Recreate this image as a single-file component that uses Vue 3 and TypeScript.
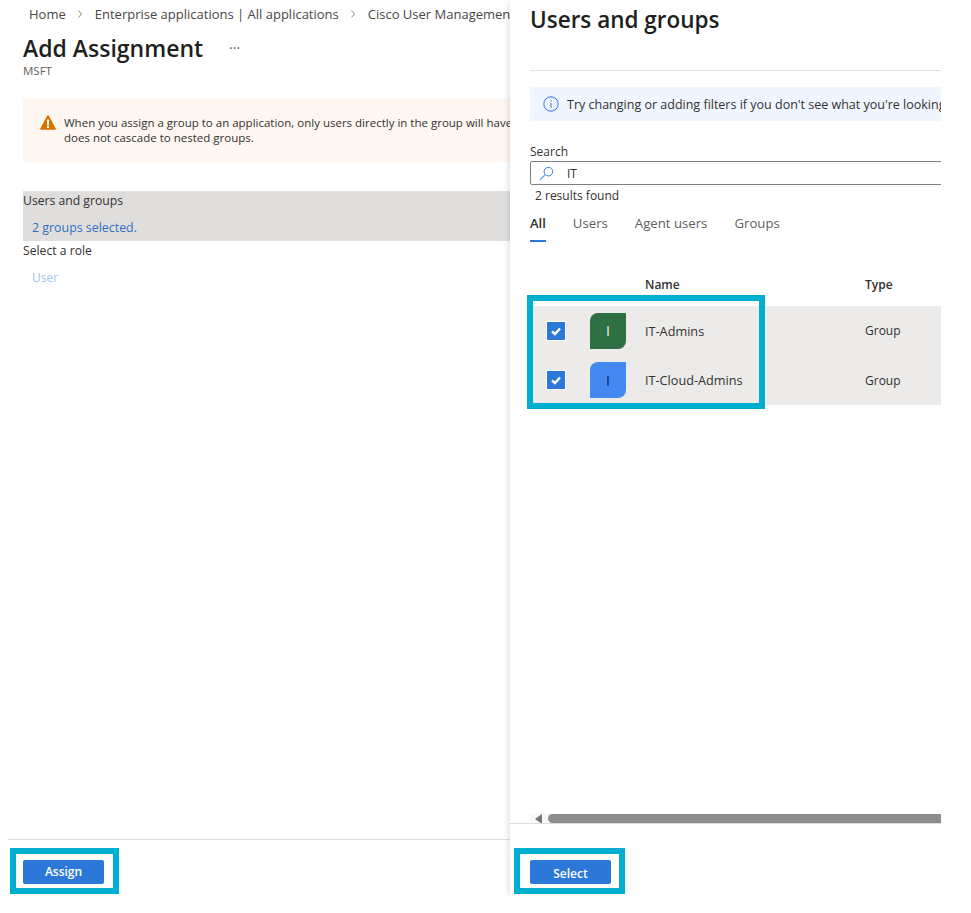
<script setup lang="ts">
interface Row { name: string; tone: string }
const rows: Row[] = [
  { name: 'IT-Admins', tone: 'green' },
  { name: 'IT-Cloud-Admins', tone: 'blue' },
]
const tabs = ['All', 'Users', 'Agent users', 'Groups']
</script>

<template>
  <div class="page">
    <section class="blade">
      <nav class="crumbs">
        <span>Home</span>
        <svg class="chev" viewBox="0 0 4 8" width="4" height="8"><path d="M0.5 0.5 L3.5 4 L0.5 7.5" fill="none" stroke="#8a8886" stroke-width="1" /></svg>
        <span>Enterprise applications | All applications</span>
        <svg class="chev" viewBox="0 0 4 8" width="4" height="8"><path d="M0.5 0.5 L3.5 4 L0.5 7.5" fill="none" stroke="#8a8886" stroke-width="1" /></svg>
        <span>Cisco User Management</span>
      </nav>
      <header class="head">
        <h1>Add Assignment</h1>
        <span class="more">···</span>
      </header>
      <p class="sub">MSFT</p>
      <div class="warn">
        <svg class="warn-ico" viewBox="0 0 16 15" width="16" height="15">
          <path d="M8 1 L15 14 H1 Z" fill="#d67300" stroke="#d67300" stroke-width="1.6" stroke-linejoin="round" />
          <rect x="7" y="4.5" width="2" height="5.6" fill="#fff" />
          <rect x="7" y="11" width="2" height="2" fill="#fff" />
        </svg>
        <p>When you assign a group to an application, only users directly in the group will have access. Group assignment<br />does not cascade to nested groups.</p>
      </div>
      <div class="band">
        <div class="label">Users and groups</div>
        <div class="link">2 groups selected.</div>
      </div>
      <div class="label role">Select a role</div>
      <div class="muted">User</div>
      <footer class="foot">
        <button class="btn">Assign</button>
      </footer>
      <div class="mark mark-assign"></div>
    </section>

    <section class="panel">
      <h2>Users and groups</h2>
      <div class="rule"></div>
      <div class="info">
        <svg viewBox="0 0 16 16" width="16" height="16" class="info-ico">
          <circle cx="8" cy="8" r="7.2" fill="none" stroke="#2f74e0" stroke-width="1" />
          <rect x="7.5" y="7" width="1" height="4.6" fill="#2f74e0" />
          <rect x="7.5" y="4.6" width="1" height="1.2" fill="#2f74e0" />
        </svg>
        <span>Try changing or adding filters if you don't see what you're looking for.</span>
      </div>
      <label class="s-label">Search</label>
      <div class="search">
        <svg viewBox="0 0 16 16" width="15" height="15" class="s-ico">
          <circle cx="10" cy="6" r="4.6" fill="none" stroke="#2f74e0" stroke-width="1" />
          <path d="M6.6 9.4 L1 15" stroke="#6ea4ee" stroke-width="1.4" />
        </svg>
        <span>IT</span>
      </div>
      <div class="found">2 results found</div>
      <div class="tabs">
        <span v-for="(t, i) in tabs" :key="t" class="tab" :class="{ on: i === 0 }">{{ t }}</span>
      </div>
      <div class="grid thead">
        <span></span>
        <span>Name</span>
        <span>Type</span>
      </div>
      <div class="tbody">
        <div v-for="r in rows" :key="r.name" class="grid row">
          <span class="lead">
            <span class="check">
              <svg viewBox="0 0 12 12" width="12" height="12">
                <path d="M2 6.5 L5 9 L10 3.5" fill="none" stroke="#fff" stroke-width="2.4" />
              </svg>
            </span>
            <span class="avatar" :class="r.tone">I</span>
          </span>
          <span class="name">{{ r.name }}</span>
          <span>Group</span>
        </div>
      </div>
      <div class="spacer"></div>
      <div class="scroll">
        <i class="arrow"></i>
        <div class="thumb"></div>
      </div>
      <footer class="foot2">
        <button class="btn low">Select</button>
      </footer>
      <div class="mark mark-rows"></div>
      <div class="mark mark-select"></div>
    </section>
  </div>
</template>

<style>
html, body { margin: 0; background: #fff; }
</style>

<style scoped>
.page {
  display: flex;
  width: 971px;
  height: 898px;
  font-family: "Open Sans", "Noto Sans", sans-serif;
  color: #323130;
  font-size: 12px;
  overflow: hidden;
}
.blade {
  position: relative;
  width: 510px;
  flex: none;
  display: flex;
  flex-direction: column;
  overflow: hidden;
  padding-left: 23px;
  box-sizing: border-box;
  white-space: nowrap;
}
.crumbs {
  display: flex;
  align-items: center;
  height: 14px;
  margin-top: 7px;
  padding-left: 6px;
  font-size: 13px;
  color: #484644;
}
.chev { flex: none; margin: 0 12.5px; }
.head { display: flex; align-items: center; margin-top: 14px; height: 26px; }
h1 { margin: 0; font-size: 23px; font-weight: 600; color: #201f1e; }
.more { margin-left: 26px; margin-bottom: 2px; font-size: 14px; color: #605e5c; }
.sub { margin: 3px 0 0; font-size: 11.5px; line-height: 14px; color: #605e5c; }
.warn {
  display: flex;
  margin-top: 20px;
  height: 64px;
  background: #fef7f1;
  padding: 17px 0 0 17px;
  box-sizing: border-box;
}
.warn p { margin: 0; font-size: 11.5px; line-height: 15px; color: #323130; }
.warn-ico { flex: none; margin: 0 8px 0 0; }
.band { margin-top: 29px; height: 50px; padding-top: 1px; box-sizing: border-box; background: #e0dedd; }
.label { font-size: 12.2px; line-height: 18px; color: #323130; }
.link { margin: 9px 0 0 9px; font-size: 12.4px; line-height: 18px; color: #2f6fc0; }
.role { margin-top: 1px; }
.muted { margin: 9px 0 0 9px; font-size: 12px; line-height: 18px; color: #a6c4e8; }
.foot {
  margin: auto 0 0 -15px;
  height: 59px;
  box-sizing: border-box;
  border-top: 1px solid #dcdcdc;
  padding: 20px 0 0 15px;
}
.btn {
  display: block;
  width: 81px;
  height: 24px;
  padding: 0 0 1px;
  border: 0;
  border-radius: 2px;
  background: #2b78d8;
  color: #fff;
  font: 600 12px "Open Sans", sans-serif;
}
.btn.low { padding: 3px 0 0; }
.panel {
  position: relative;
  width: 431px;
  flex: none;
  box-sizing: border-box;
  padding-left: 20px;
  display: flex;
  flex-direction: column;
  overflow: hidden;
  white-space: nowrap;
  box-shadow: -4px 0 6px -3px rgba(0, 0, 0, 0.15);
  clip-path: inset(0 0 0 -8px);
}
h2 { margin: 6px 0 0; font-size: 22.5px; line-height: 28px; font-weight: 600; color: #201f1e; }
.rule { height: 1px; background: #e1e1e1; margin-top: 36px; flex: none; }
.info {
  display: flex;
  align-items: center;
  height: 34px;
  margin-top: 16px;
  background: #f0f6ff;
  padding-left: 13px;
  font-size: 12.5px;
  flex: none;
}
.info-ico { flex: none; margin-right: 8px; }
.s-label { margin-top: 23px; font-size: 12px; line-height: 16px; }
.search {
  display: flex;
  align-items: center;
  height: 24px;
  margin-top: 1px;
  margin-right: -4px;
  border: 1px solid #808080;
  border-radius: 2px;
  box-sizing: border-box;
  padding-left: 8px;
  flex: none;
}
.s-ico { margin-right: 13px; }
.found { margin: 2px 0 0 5px; line-height: 18px; font-size: 12px; }
.tabs { display: flex; gap: 27px; margin-top: 8px; height: 29px; flex: none; }
.tab { font-size: 13.2px; line-height: 20px; color: #605e5c; height: 29px; box-sizing: border-box; }
.tab.on { font-size: 13px; color: #323130; font-weight: 600; border-bottom: 2px solid #2b78d8; }
.grid {
  display: grid;
  grid-template-columns: 115px 220px 1fr;
  align-items: center;
}
.thead { margin-top: 34px; height: 18px; line-height: 18px; font-weight: 600; flex: none; }
.tbody { margin-top: 12px; background: #ecebe9; height: 99px; flex: none; }
.row { height: 49.5px; }
.name { font-size: 12.7px; }
.lead { display: flex; align-items: center; padding-left: 15.5px; }
.check {
  flex: none;
  width: 18px;
  height: 18px;
  border: 1px solid #fff;
  background: #2b78d8;
  display: flex;
  align-items: center;
  justify-content: center;
  margin-right: 24.5px;
}
.avatar {
  flex: none;
  width: 36px;
  height: 36px;
  border-radius: 8px 0 8px 0;
  display: flex;
  align-items: center;
  justify-content: center;
  font-size: 14px;
}
.avatar.green { background: #2e6f43; color: #f0f7f2; }
.avatar.blue { background: #4488f0; color: #0a2270; }
.spacer { flex: 1; }
.scroll {
  height: 9px;
  padding-left: 5px;
  display: flex;
  align-items: center;
  background: #fafafa;
  flex: none;
}
.arrow {
  width: 0;
  height: 0;
  border: 5px solid transparent;
  border-left: 0;
  border-right: 7px solid #777;
  margin-right: 6px;
}
.thumb { flex: 1; height: 9px; background: #8c8c8c; border-radius: 5px 0 0 5px; }
.foot2 {
  flex: none;
  margin-left: -20px;
  height: 75px;
  box-sizing: border-box;
  border-top: 1px solid #dcdcdc;
  padding: 36px 0 0 20px;
}
.mark { position: absolute; border: 6px solid #00aecf; box-sizing: border-box; pointer-events: none; }
.mark-assign { left: 10px; top: 848px; width: 109px; height: 46px; }
.mark-rows { left: 17px; top: 295px; width: 238px; height: 114px; }
.mark-select { left: 4px; top: 848px; width: 111px; height: 46px; }
</style>
